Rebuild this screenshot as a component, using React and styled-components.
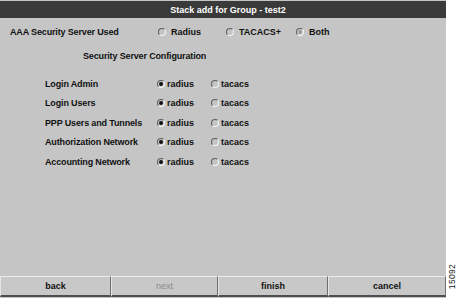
import styled, { createGlobalStyle } from "styled-components";

const Global = createGlobalStyle`
    html, body {
        margin: 0;
        padding: 0;
        background: #ffffff;
    }
    body {
        font-family: "Liberation Sans", Arial, sans-serif;
    }
`;

const Page = styled.div`
    display: flex;
    width: 457px;
    height: 298px;
    overflow: hidden;
`;

const Panel = styled.div`
    width: 446px;
    height: 298px;
    display: flex;
    flex-direction: column;
    background-color: #c5c5c5;
`;

const TitleBar = styled.div`
    height: 17px;
    margin-top: 1px;
    background-color: #3a3a3a;
    color: #ffffff;
    font-size: 9px;
    font-weight: bold;
    display: flex;
    align-items: center;
    justify-content: center;
    padding-left: 10px;
`;

const Body = styled.div`
    flex-grow: 1;
    padding-top: 6px;
`;

const TopRow = styled.div`
    display: grid;
    grid-template-columns: 148px 68px 70px 1fr;
    align-items: center;
    height: 16px;
    padding-left: 10px;
`;

const Label = styled.div`
    font-size: 9px;
    font-weight: bold;
    letter-spacing: -0.15px;
    color: #111;
`;

const Heading = styled.div`
    font-size: 9px;
    font-weight: bold;
    letter-spacing: -0.15px;
    color: #111;
    height: 16px;
    line-height: 16px;
    margin: 8px 0 10px 83px;
`;

const ConfigRow = styled.div`
    display: grid;
    grid-template-columns: 112px 54px 1fr;
    align-items: center;
    height: 19.5px;
    padding-left: 45px;
`;

const Option = styled.label`
    display: flex;
    align-items: center;
    gap: ${(p) => (p.$wide ? "5px" : "2px")};
    font-size: 9px;
    font-weight: bold;
    color: #111;
`;

const Radio = styled.span`
    position: relative;
    width: 8px;
    height: 8px;
    box-sizing: border-box;
    border-radius: 50%;
    border: 1px solid;
    border-color: #5e5e5e #f4f4f4 #f4f4f4 #5e5e5e;
    background: ${(p) => (p.$muted ? "#d0d0d0" : "#c5c5c5")};
    &::after {
        content: "";
        display: ${(p) => (p.$checked ? "block" : "none")};
        position: absolute;
        left: 1px;
        top: 1px;
        width: 4px;
        height: 4px;
        border-radius: 50%;
        background: ${(p) => (p.$muted ? "#9a9a9a" : "#111")};
    }
`;

const Footer = styled.div`
    display: grid;
    grid-template-columns: 111px 107px 110px 1fr;
    height: 21px;
    margin-bottom: 1px;
`;

const Button = styled.div`
    display: flex;
    align-items: center;
    justify-content: center;
    box-sizing: border-box;
    border-top: 1px solid #ececec;
    border-left: 1px solid #e4e4e4;
    border-right: 1px solid #6e6e6e;
    border-bottom: 2px solid #4e4e4e;
    background-color: #c8c8c8;
    font-size: 9px;
    font-weight: ${(p) => (p.$disabled ? "normal" : "bold")};
    color: ${(p) => (p.$disabled ? "#8a8a8a" : "#111")};
`;

const Side = styled.div`
    flex-grow: 1;
    display: flex;
    flex-direction: column;
    justify-content: flex-end;
    align-items: center;
    padding-bottom: 9px;
`;

const Stamp = styled.div`
    writing-mode: vertical-rl;
    transform: rotate(180deg);
    font-size: 8.5px;
    color: #222;
    letter-spacing: 0.3px;
`;

const rows = [
    "Login Admin",
    "Login Users",
    "PPP Users and Tunnels",
    "Authorization Network",
    "Accounting Network",
];

const App = () => {
    return (
        <>
            <Global />
            <Page>
                <Panel>
                    <TitleBar>Stack add for Group - test2</TitleBar>
                    <Body>
                        <TopRow>
                            <Label>AAA Security Server Used</Label>
                            <Option $wide><Radio />Radius</Option>
                            <Option $wide><Radio />TACACS+</Option>
                            <Option $wide><Radio $checked $muted />Both</Option>
                        </TopRow>
                        <Heading>Security Server Configuration</Heading>
                        {rows.map((name) => (
                            <ConfigRow key={name}>
                                <Label>{name}</Label>
                                <Option><Radio $checked />radius</Option>
                                <Option><Radio />tacacs</Option>
                            </ConfigRow>
                        ))}
                    </Body>
                    <Footer>
                        <Button>back</Button>
                        <Button $disabled>next</Button>
                        <Button>finish</Button>
                        <Button>cancel</Button>
                    </Footer>
                </Panel>
                <Side>
                    <Stamp>15092</Stamp>
                </Side>
            </Page>
        </>
    );
};

export default App;
